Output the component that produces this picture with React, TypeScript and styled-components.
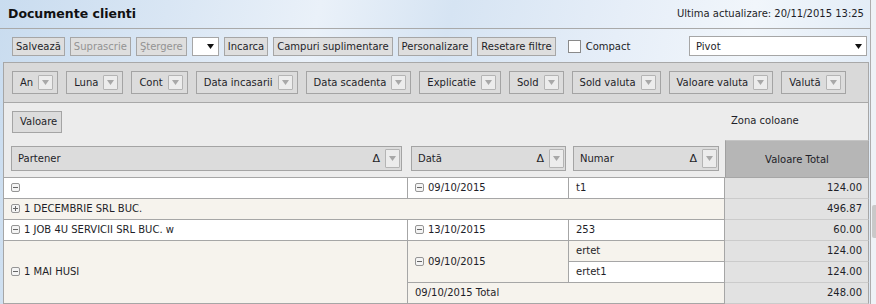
import React from 'react';
import styled, { createGlobalStyle } from 'styled-components';

const GlobalStyle = createGlobalStyle`
  html, body {
    margin: 0;
    padding: 0;
  }

  body {
    font-family: "DejaVu Sans", Verdana, sans-serif;
    font-size: 10px;
    color: #1e1e28;
  }

  * {
    box-sizing: border-box;
  }
`;

const COLUMNS = '404px 161px 156px 144px';

const Page = styled.div`
  display: flex;
  align-items: flex-start;
  width: 876px;
  height: 304px;
  overflow: hidden;
  background: linear-gradient(
    103deg,
    #c9dcef 0%,
    #d9e6f4 18%,
    #eaf1f9 34%,
    #d6e4f3 48%,
    #e6eef8 66%,
    #f1f6fb 80%,
    #dbe7f4 100%
  );
`;

const Main = styled.div`
  width: 870px;
  flex-shrink: 0;
`;

const Header = styled.header`
  height: 29px;
  display: flex;
  align-items: center;
  justify-content: space-between;
  padding: 0 6px 1px 8px;
  border-bottom: 1px solid #a9a9a9;
`;

const Title = styled.h1`
  margin: 0;
  font-size: 12.5px;
  font-weight: bold;
  color: #111;
`;

const Updated = styled.span`
  font-size: 10px;
`;

const Toolbar = styled.div`
  display: flex;
  align-items: center;
  height: 20px;
  margin-top: 7px;
  padding-left: 12px;
`;

const ToolButton = styled.button<{ $disabled?: boolean }>`
  height: 19px;
  margin: 0 5px 0 0;
  padding: 0 3px;
  border: 1px solid #a6a6a6;
  border-radius: 0;
  background: #dedede;
  font-family: inherit;
  font-size: 10px;
  color: ${(p) => (p.$disabled ? '#939393' : '#1e1e28')};
`;

const SelectBox = styled.div<{ $width: number }>`
  width: ${(p) => p.$width}px;
  height: ${(p) => (p.$width > 40 ? 20 : 19)}px;
  margin-right: 5px;
  display: flex;
  align-items: center;
  justify-content: space-between;
  padding: 0 4px 0 6px;
  background: #fff;
  border: 1px solid #a6a6a6;
`;

const Check = styled.span`
  width: 13px;
  height: 13px;
  margin: 0 5px 0 7px;
  background: #fff;
  border: 1px solid #8a8a8a;
`;

const PivotSelect = styled(SelectBox)`
  margin-left: auto;
  margin-right: 3px;
`;

const Pivot = styled.div`
  margin: 6px 0 0 3px;
  width: 866px;
  border-left: 1px solid #a6a6a6;
`;

const FilterZone = styled.div`
  height: 41px;
  display: flex;
  align-items: center;
  gap: 8px;
  padding-left: 8px;
  background: #d9d9d9;
  border: 1px solid #a8a8a8;
  border-left: none;
`;

const Chip = styled.div<{ $height: number }>`
  height: ${(p) => p.$height}px;
  display: flex;
  align-items: center;
  gap: 5px;
  padding: 0 4px 0 7px;
  background: #dcdcdc;
  border: 1px solid #a4a4a4;
  white-space: nowrap;
`;

const MiniButton = styled.span<{ $h: number }>`
  width: 15px;
  height: ${(p) => p.$h}px;
  display: flex;
  align-items: center;
  justify-content: center;
  background: #ececec;
  border: 1px solid #b4b4b4;
  border-radius: 1px;
`;

const AxisArea = styled.div`
  display: grid;
  grid-template-columns: ${COLUMNS};
  grid-template-rows: 37px 37px;
  background: #ececec;
`;

const RowFields = styled.div`
  grid-column: 1 / 4;
  display: flex;
  align-items: center;
  padding-left: 8px;
`;

const ColumnZone = styled.div`
  display: flex;
  align-items: center;
  padding: 0 0 2px 6px;
  border-right: 1px solid #a6a6a6;
`;

const HeaderCell = styled.div<{ $pad: string }>`
  padding: ${(p) => p.$pad};
  display: flex;
`;

const HeaderChip = styled(Chip)`
  flex: 1;
  padding: 0 1px 0 6px;
`;

const HeaderLabel = styled.span`
  flex: 1;
`;

const Sort = styled.span`
  font-size: 11px;
`;

const TotalHeader = styled.div`
  display: flex;
  align-items: center;
  justify-content: center;
  background: #b6b6b6;
  border-top: 1px solid #c4c4c4;
  border-left: 1px solid #a0a0a0;
  border-right: 1px solid #a6a6a6;
`;

const DataGrid = styled.div`
  display: grid;
  grid-template-columns: ${COLUMNS};
  grid-auto-rows: 21px;
  border-top: 1px solid #a6a6a6;
`;

const Cell = styled.div<{ $tone: 'white' | 'beige'; $col?: string; $row?: string }>`
  grid-column: ${(p) => p.$col || 'auto'};
  grid-row: ${(p) => p.$row || 'auto'};
  display: flex;
  align-items: center;
  gap: 4px;
  padding: 0 6px 1px 7px;
  background: ${(p) => (p.$tone === 'white' ? '#ffffff' : '#f6f3ed')};
  border-right: 1px solid #a6a6a6;
  border-bottom: 1px solid #a6a6a6;
  white-space: nowrap;
`;

const ValueCell = styled.div`
  display: flex;
  align-items: center;
  justify-content: flex-end;
  padding: 0 6px 1px 0;
  background: #e2e2e2;
  border-right: 1px solid #a6a6a6;
  border-bottom: 1px solid #cbcbcb;
`;

const Scroll = styled.div`
  flex: 1;
  align-self: stretch;
  border-left: 1px solid #adadad;
  background: #eef2f6;
  padding-top: 205px;
`;

const Thumb = styled.div`
  height: 33px;
  margin-left: 1px;
  background: #c9c9c9;
  border-radius: 2px 0 0 2px;
`;

const Toggle: React.FC<{ open?: boolean }> = ({ open = true }) => (
  <svg width="9" height="9" viewBox="0 0 9 9">
    <rect x="0.5" y="0.5" width="8" height="8" rx="1.5" fill="#f4f4f4" stroke="#959595" />
    <path d="M2 4.5h5" stroke="#666" />
    {!open && <path d="M4.5 2v5" stroke="#666" />}
  </svg>
);

const DownArrow: React.FC<{ color?: string }> = ({ color = '#111' }) => (
  <svg width="7" height="5" viewBox="0 0 7 5">
    <path d="M0 0h7L3.5 5z" fill={color} />
  </svg>
);

const filters = ['An', 'Luna', 'Cont', 'Data incasarii', 'Data scadenta', 'Explicatie', 'Sold', 'Sold valuta', 'Valoare valuta', 'Valută'];

const App: React.FC = () => (
  <>
    <GlobalStyle />
    <Page>
      <Main>
        <Header>
          <Title>Documente clienti</Title>
          <Updated>Ultima actualizare: 20/11/2015 13:25</Updated>
        </Header>

        <Toolbar>
          <ToolButton>Salvează</ToolButton>
          <ToolButton $disabled>Suprascrie</ToolButton>
          <ToolButton $disabled>Ştergere</ToolButton>
          <SelectBox $width={27}>
            <span />
            <DownArrow />
          </SelectBox>
          <ToolButton>Incarca</ToolButton>
          <ToolButton>Campuri suplimentare</ToolButton>
          <ToolButton>Personalizare</ToolButton>
          <ToolButton>Resetare filtre</ToolButton>
          <Check />
          <span>Compact</span>
          <PivotSelect $width={178}>
            <span>Pivot</span>
            <DownArrow />
          </PivotSelect>
        </Toolbar>

        <Pivot>
          <FilterZone>
            {filters.map((f) => (
              <Chip key={f} $height={23}>
                {f}
                <MiniButton $h={15}>
                  <DownArrow color="#a8a8a8" />
                </MiniButton>
              </Chip>
            ))}
          </FilterZone>

          <AxisArea>
            <RowFields>
              <Chip $height={22}>Valoare</Chip>
            </RowFields>
            <ColumnZone>Zona coloane</ColumnZone>

            <HeaderCell $pad="6px 6px 6px 7px">
              <HeaderChip $height={25}>
                <HeaderLabel>Partener</HeaderLabel>
                <Sort>Δ</Sort>
                <MiniButton $h={19}>
                  <DownArrow color="#a8a8a8" />
                </MiniButton>
              </HeaderChip>
            </HeaderCell>
            <HeaderCell $pad="6px 3px 6px 3px">
              <HeaderChip $height={25}>
                <HeaderLabel>Dată</HeaderLabel>
                <Sort>Δ</Sort>
                <MiniButton $h={19}>
                  <DownArrow color="#a8a8a8" />
                </MiniButton>
              </HeaderChip>
            </HeaderCell>
            <HeaderCell $pad="6px 6px 6px 4px">
              <HeaderChip $height={25}>
                <HeaderLabel>Numar</HeaderLabel>
                <Sort>Δ</Sort>
                <MiniButton $h={19}>
                  <DownArrow color="#a8a8a8" />
                </MiniButton>
              </HeaderChip>
            </HeaderCell>
            <TotalHeader>Valoare Total</TotalHeader>
          </AxisArea>

          <DataGrid>
            <Cell $tone="white"><Toggle /></Cell>
            <Cell $tone="white"><Toggle /> 09/10/2015</Cell>
            <Cell $tone="white">t1</Cell>
            <ValueCell>124.00</ValueCell>

            <Cell $tone="beige" $col="1 / 4"><Toggle open={false} /> 1 DECEMBRIE SRL BUC.</Cell>
            <ValueCell>496.87</ValueCell>

            <Cell $tone="white"><Toggle /> 1 JOB 4U SERVICII SRL BUC. w</Cell>
            <Cell $tone="white"><Toggle /> 13/10/2015</Cell>
            <Cell $tone="white">253</Cell>
            <ValueCell>60.00</ValueCell>

            <Cell $tone="beige" $col="1" $row="span 3"><Toggle /> 1 MAI HUSI</Cell>
            <Cell $tone="beige" $col="2" $row="span 2"><Toggle /> 09/10/2015</Cell>
            <Cell $tone="beige">ertet</Cell>
            <ValueCell>124.00</ValueCell>
            <Cell $tone="white" $col="3">ertet1</Cell>
            <ValueCell>124.00</ValueCell>
            <Cell $tone="beige" $col="2 / 4">09/10/2015 Total</Cell>
            <ValueCell>248.00</ValueCell>

            <Cell $tone="beige" />
            <Cell $tone="white" />
            <Cell $tone="white" />
            <ValueCell />
          </DataGrid>
        </Pivot>
      </Main>
      <Scroll>
        <Thumb />
      </Scroll>
    </Page>
  </>
);

export default App;
